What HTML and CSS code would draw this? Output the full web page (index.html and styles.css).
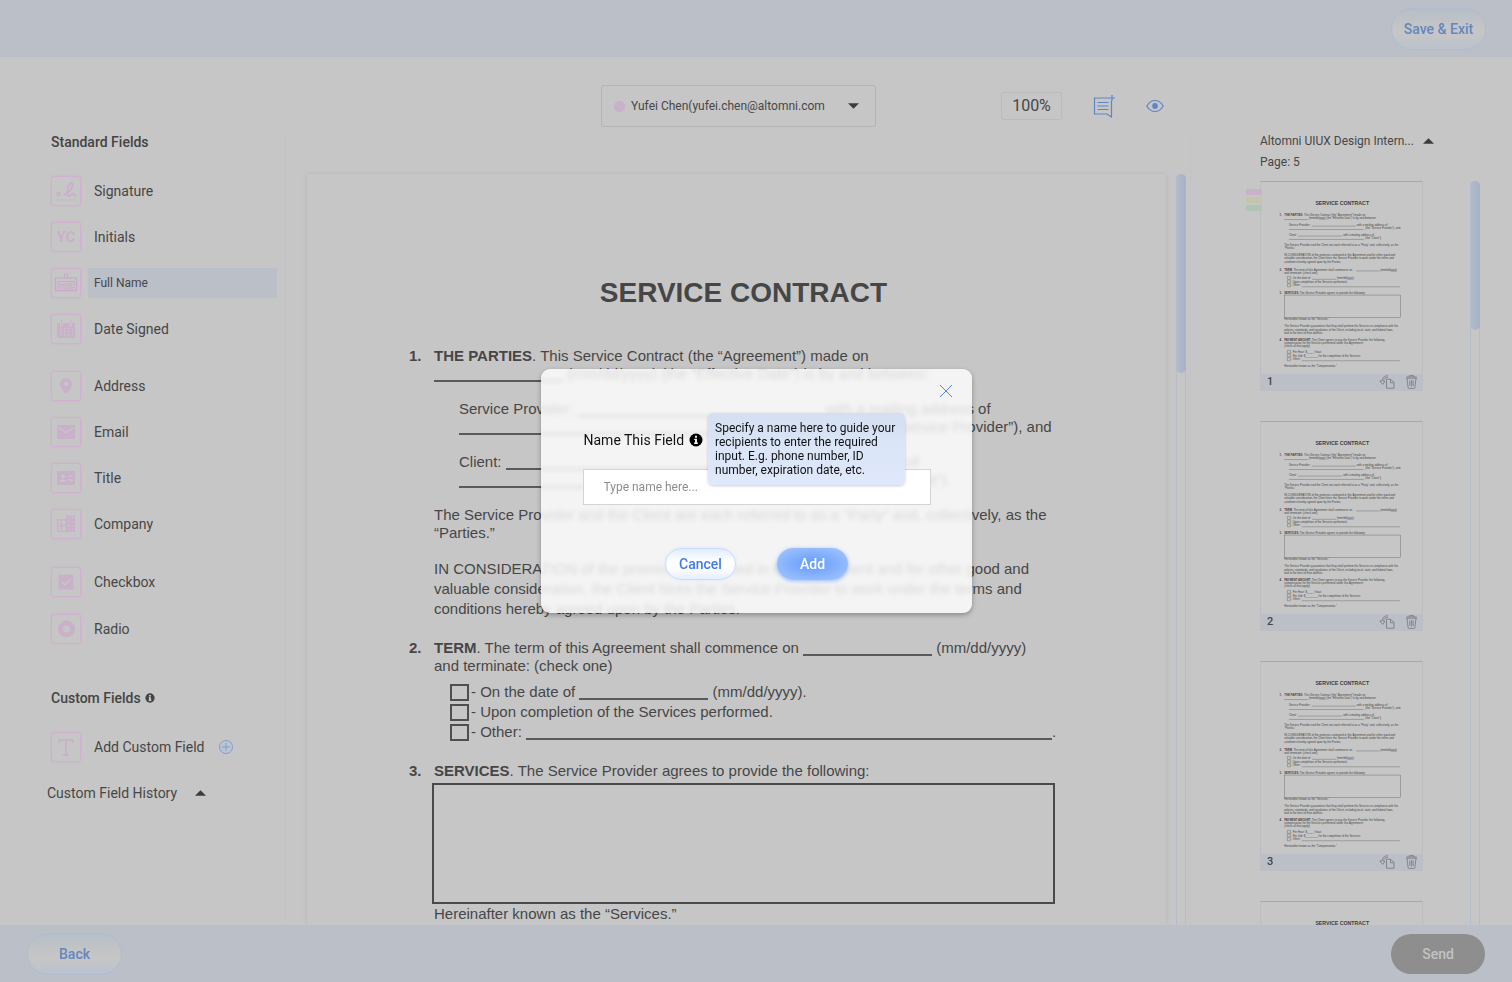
FILE: index.html
```html
<!DOCTYPE html>
<html lang="en">
<head>
<meta charset="utf-8">
<meta name="viewport" content="width=device-width, initial-scale=1">
<title>Service Contract</title>
<link rel="stylesheet" href="styles.css">
</head>
<body>
<svg class="defs" aria-hidden="true">
  <symbol id="info" viewBox="0 0 14 14"><circle cx="7" cy="7" r="6.5" fill="currentColor"/><path class="info-mark" d="M6 2.8h2v2H6zM5.2 5.8H8v3.8h.9V11H5.1V9.600h.9V7.100h-.8z"/></symbol>
  <symbol id="up" viewBox="0 0 12 6"><path d="M6 0l6 6H0z" fill="currentColor"/></symbol>
  <symbol id="down" viewBox="0 0 12 6"><path d="M0 0h12L6 6z" fill="currentColor"/></symbol>
  <symbol id="replace" viewBox="0 0 16 14"><g fill="none" stroke="currentColor" stroke-width=".8"><path d="M7.500 4.200h4.200l3.300 3.300v5.700H7.500zM11.500 4.300v3.500h3.400"/><path d="M9 .8C5.500.6 3.300 2.600 3 6H.8l2.900 3.400L6 6.500l-1.500-.3C4.800 3.800 6.200 2.600 9 2.200"/></g></symbol>
  <symbol id="trash" viewBox="0 0 12 14"><g fill="none" stroke="currentColor" stroke-width=".8"><path d="M.5 3.200h11M1 1.900h10M4 1.700V.6h4v1.100M1.500 3.400l1.100 9.100q.1.900 1 .9h4.800q.9 0 1-.9l1.100-9.100"/><path d="M4.300 5.500v5.500M6 5v6.500M7.700 5.500v5.500"/></g></symbol>
  <symbol id="contract" viewBox="4 8 860 1020">
    <text class="mini-title" x="438" y="127" text-anchor="middle">SERVICE CONTRACT</text>
    <g class="mini-text">
      <text x="103" y="186" class="mini-bold">1.</text><text x="128" y="186"><tspan class="mini-bold">THE PARTIES</tspan>. This Service Contract (the “Agreement”) made on</text>
      <text x="260" y="204">(mm/dd/yyyy) (the “Effective Date”) is by and between:</text>
      <text x="153" y="239">Service Provider:</text><text x="515" y="239">with a mailing address of</text><text x="561" y="257">(the “Service Provider”), and</text>
      <text x="153" y="292">Client:</text><text x="443" y="292">with a mailing address of</text><text x="561" y="310">(the “Client”).</text>
      <text x="128" y="346">The Service Provider and the Client are each referred to as a “Party” and, collectively, as the</text><text x="128" y="364">“Parties.”</text>
      <text x="128" y="399">IN CONSIDERATION of the promises contained in this Agreement and for other good and</text><text x="128" y="419">valuable consideration, the Client hires the Service Provider to work under the terms and</text><text x="128" y="439">conditions hereby agreed upon by the Parties.</text>
      <text x="103" y="478" class="mini-bold">2.</text><text x="128" y="478"><tspan class="mini-bold">TERM</tspan>. The term of this Agreement shall commence on</text><text x="641" y="478">(mm/dd/yyyy)</text><text x="128" y="496">and terminate: (check one)</text>
      <text x="164" y="523">- On the date of</text><text x="409" y="523">(mm/dd/yyyy).</text><text x="164" y="543">- Upon completion of the Services performed.</text><text x="164" y="563">- Other:</text>
      <text x="103" y="601" class="mini-bold">3.</text><text x="128" y="601"><tspan class="mini-bold">SERVICES</tspan>. The Service Provider agrees to provide the following:</text>
      <text x="128" y="745">Hereinafter known as the “Services.”</text>
      <text x="128" y="782">The Service Provider guarantees that they shall perform the Services in compliance with the</text><text x="128" y="800">policies, standards, and regulations of the Client, including local, state, and federal laws,</text><text x="128" y="818">and to the best of their abilities.</text>
      <text x="103" y="852" class="mini-bold">4.</text><text x="128" y="852"><tspan class="mini-bold">PAYMENT AMOUNT</tspan>. The Client agrees to pay the Service Provider the following</text><text x="128" y="870">compensation for the Services performed under this Agreement:</text><text x="128" y="888">(check all that apply)</text>
      <text x="164" y="918">- Per Hour: $____ / hour.</text><text x="164" y="938">- Per Job: $________ for the completion of the Services.</text><text x="164" y="958">- Other:</text>
      <text x="128" y="995">Hereinafter known as the “Compensation.”</text>
    </g>
    <g class="mini-rule">
      <path d="M128 206h128M274 241h237M153 259h400M202 294h236M153 312h400M511 480h126M277 525h128M222 565h524M222 960h524"/>
      <rect x="128" y="609" width="620" height="119"/>
      <path d="M145 509h16v16h-16zM145 529h16v16h-16zM145 549h16v16h-16zM145 904h16v16h-16zM145 924h16v16h-16zM145 944h16v16h-16z"/>
    </g>
  </symbol>
</svg>

<div class="app">
  <header class="bar"><button class="pill outline push" type="button">Save &amp; Exit</button></header>

  <main class="workspace">
    <aside class="fields">
      <h2 class="heading">Standard Fields</h2>
      <div class="field-groups">
        <div class="field-group">
          <button class="field" type="button"><span class="tile"><svg viewBox="0 0 30 30"><g fill="none" stroke="currentColor" stroke-width="2"><path d="M5.500 16l4 4M9.500 16l-4 4"/><path stroke-linecap="round" d="M13.500 18.500C18 17 22.500 11 21.500 7.800 20.500 5.500 17.500 8 16.800 12 16 16 16 20 18.500 20c2 0 2-3 3.500-2.500.7.500 0 3 2.500 2"/></g><path d="M6 23.900h18" stroke="currentColor" stroke-width="1.800" stroke-dasharray="1.800 2.200"/></svg></span><span class="field-name">Signature</span></button>
          <button class="field" type="button"><span class="tile tile-text">YC</span><span class="field-name">Initials</span></button>
          <button class="field selected" type="button"><span class="tile"><svg viewBox="0 0 30 30"><g fill="none" stroke="currentColor"><path stroke-width="1.300" d="M4.500 9.800h21v12.700h-21z"/><path d="M7 13.500h16v6.500H7zM13.500 11V6h3v5"/><path stroke-width=".8" d="M9 18.500v-3l2 3v-3M12 18.500l1-3 1 3M15.200 18.500v-3l1 2 1-2v3M20.700 15.500h-2v3h2M18.700 17h2"/></g></svg></span><span class="field-name">Full Name</span></button>
          <button class="field" type="button"><span class="tile"><svg viewBox="0 0 30 30"><path fill="currentColor" d="M6 9h3v3h3V9h6v3h3V9h3v15H6z"/><path stroke="currentColor" d="M10.500 6v5M19.500 6v5"/><path class="cut-line" stroke-dasharray="1.500 2.500" stroke-width="1.500" d="M9 14.700h13M9 17.700h13M9 20.700h13"/></svg></span><span class="field-name">Date Signed</span></button>
        </div>
        <div class="field-group">
          <button class="field" type="button"><span class="tile"><svg viewBox="0 0 30 30"><path fill="currentColor" fill-rule="evenodd" d="M15 7a6 6 0 0 0-6 6c0 4.400 6 10 6 10s6-5.600 6-10a6 6 0 0 0-6-6zm0 3.700a2.200 2.200 0 1 1 0 4.400 2.200 2.200 0 0 1 0-4.400z"/></svg></span><span class="field-name">Address</span></button>
          <button class="field" type="button"><span class="tile"><svg viewBox="0 0 30 30"><rect x="6" y="8" width="18" height="14" rx="1" fill="currentColor"/><path class="cut-line" stroke-width="1.500" d="M7.500 10.500l7.500 5 7.500-5"/></svg></span><span class="field-name">Email</span></button>
          <button class="field" type="button"><span class="tile"><svg viewBox="0 0 30 30"><rect x="6" y="8" width="18" height="14" rx="1" fill="currentColor"/><circle class="cut" cx="12" cy="13.500" r="2"/><path class="cut" d="M8.500 18.800c0-3 7-3 7 0z"/><path class="cut-line" stroke-width="1.300" d="M17 13.200h5M17 17h5"/></svg></span><span class="field-name">Title</span></button>
          <button class="field" type="button"><span class="tile"><svg viewBox="0 0 30 30"><path fill="currentColor" d="M15 6.500h9V23H15z"/><path fill="none" stroke="currentColor" stroke-width="1.500" d="M6.700 11H15v11.300H6.700zM10.500 13v8M8 16.700h7"/><path class="cut-line" stroke-width="1.500" stroke-dasharray="1.500 2.500" d="M17.500 8v13M21.500 8v13"/></svg></span><span class="field-name">Company</span></button>
        </div>
        <div class="field-group controls">
          <button class="field" type="button"><span class="tile"><svg viewBox="0 0 30 30"><rect x="7.500" y="7.500" width="15" height="15" rx="1.500" fill="currentColor"/><path class="cut-line" stroke-width="1.500" d="M11 15l3 3 5.500-6"/></svg></span><span class="field-name">Checkbox</span></button>
          <button class="field" type="button"><span class="tile"><svg viewBox="0 0 30 30"><circle cx="15.500" cy="15" r="6" fill="none" stroke="currentColor" stroke-width="5"/></svg></span><span class="field-name">Radio</span></button>
        </div>
      </div>
      <h2 class="heading custom-heading">Custom Fields <svg class="info-small"><use href="#info"/></svg></h2>
      <button class="field" type="button"><span class="tile"><svg viewBox="0 0 30 30"><path fill="none" stroke="currentColor" stroke-width="1.800" d="M8.500 11V8h13v3M15 8v15M12 23h6"/></svg></span><span class="field-name with-icon">Add Custom Field <svg class="plus" viewBox="0 0 14 14"><circle cx="7" cy="7" r="6.500"/><path d="M7 3v8M3 7h8"/></svg></span></button>
      <button class="history" type="button">Custom Field History <svg class="caret"><use href="#up"/></svg></button>
    </aside>

    <section class="editor">
      <div class="toolbar">
        <label class="recipient"><span class="dot"></span><select aria-label="Recipient"><option>Yufei Chen(yufei.chen@altomni.com</option></select><svg class="caret"><use href="#down"/></svg></label>
        <div class="tools">
          <button class="zoom" type="button">100%</button>
          <button class="tool" type="button" aria-label="Add comment"><svg class="note" viewBox="0 0 24 24"><g fill="none" stroke="currentColor" stroke-width="1.200"><path d="M17 4H2.500v16H15l4.500 3V6.500"/><path d="M5.500 8.500h11M5.500 12h11M5.500 15.500h11"/><path d="M20 1v6M17 4h6"/></g></svg></button>
          <button class="tool" type="button" aria-label="Preview"><svg class="eye" viewBox="0 0 18 14"><path fill="none" stroke="currentColor" stroke-width="1.200" d="M.8 7Q4 1.500 9 1.500T17.200 7Q14 12.500 9 12.500T.8 7z"/><ellipse cx="9" cy="7" rx="2.800" ry="3" fill="currentColor"/></svg></button>
        </div>
      </div>
      <div class="canvas">
        <article class="paper">
          <h1>SERVICE CONTRACT</h1>
          <section class="clause">
            <b>1.</b>
            <div>
              <p><b>THE PARTIES</b>. This Service Contract (the “Agreement”) made on<br><span class="blank w128"></span> (mm/dd/yyyy) (the “Effective Date”) is by and between:</p>
              <p class="inset">Service Provider: <span class="blank w238"></span> with a mailing address of<br><span class="blank w400"></span> (the “Service Provider”), and</p>
              <p class="inset">Client: <span class="blank w238"></span> with a mailing address of<br><span class="blank w400"></span> (the “Client”).</p>
              <p>The Service Provider and the Client are each referred to as a “Party” and, collectively, as the<br>“Parties.”</p>
              <p class="loose">IN CONSIDERATION of the promises contained in this Agreement and for other good and<br>valuable consideration, the Client hires the Service Provider to work under the terms and<br>conditions hereby agreed upon by the Parties.</p>
            </div>
          </section>
          <section class="clause">
            <b>2.</b>
            <div>
              <p><b>TERM</b>. The term of this Agreement shall commence on <span class="blank w128"></span> (mm/dd/yyyy)<br>and terminate: (check one)</p>
              <ul class="checks">
                <li><label><input type="checkbox">- On the date of <span class="blank w128"></span> (mm/dd/yyyy).</label></li>
                <li><label><input type="checkbox">- Upon completion of the Services performed.</label></li>
                <li><label><input type="checkbox">- Other: <span class="blank w525"></span>.</label></li>
              </ul>
            </div>
          </section>
          <section class="clause">
            <b>3.</b>
            <div>
              <p><b>SERVICES</b>. The Service Provider agrees to provide the following:</p>
              <div class="answer"></div>
              <p>Hereinafter known as the “Services.”</p>
            </div>
          </section>
        </article>
        <div class="scrollbar"><div class="scroll-thumb long"></div></div>
      </div>
    </section>

    <aside class="pages">
      <div class="pages-inner">
        <button class="doc-title" type="button">Altomni UIUX Design Intern... <svg class="caret"><use href="#up"/></svg></button>
        <p class="page-count">Page: 5</p>
        <div class="thumbs">
          <figure class="thumb"><div class="tags"><i class="tag"></i><i class="tag yellow"></i><i class="tag green"></i></div><svg class="mini"><use href="#contract"/></svg><figcaption>1<span class="thumb-tools"><button type="button" aria-label="Replace page 1"><svg class="replace"><use href="#replace"/></svg></button><button type="button" aria-label="Delete page 1"><svg class="trash"><use href="#trash"/></svg></button></span></figcaption></figure>
          <figure class="thumb"><svg class="mini"><use href="#contract"/></svg><figcaption>2<span class="thumb-tools"><button type="button" aria-label="Replace page 2"><svg class="replace"><use href="#replace"/></svg></button><button type="button" aria-label="Delete page 2"><svg class="trash"><use href="#trash"/></svg></button></span></figcaption></figure>
          <figure class="thumb"><svg class="mini"><use href="#contract"/></svg><figcaption>3<span class="thumb-tools"><button type="button" aria-label="Replace page 3"><svg class="replace"><use href="#replace"/></svg></button><button type="button" aria-label="Delete page 3"><svg class="trash"><use href="#trash"/></svg></button></span></figcaption></figure>
          <figure class="thumb"><svg class="mini"><use href="#contract"/></svg></figure>
        </div>
      </div>
      <div class="scrollbar"><div class="scroll-thumb"></div></div>
    </aside>
  </main>

  <footer class="bar"><button class="pill outline" type="button">Back</button><button class="pill send push" type="button">Send</button></footer>
</div>

<div class="overlay">
  <form class="dialog" role="dialog" aria-label="Name This Field">
    <button class="close" type="button" aria-label="Close"><svg viewBox="0 0 14 14"><path d="M1 1l12 12M13 1L1 13"/></svg></button>
    <div class="label-row"><label for="field-name">Name This Field</label><span class="hint"><svg class="info-icon"><use href="#info"/></svg><span class="tooltip" role="tooltip">Specify a name here to guide your recipients to enter the required input. E.g. phone number, ID number, expiration date, etc.</span></span></div>
    <input class="name-input" id="field-name" type="text" placeholder="Type name here...">
    <div class="actions"><button class="small cancel" type="button">Cancel</button><button class="small add" type="button">Add</button></div>
  </form>
</div>
</body>
</html>
```

FILE: styles.css
```css
* { box-sizing: border-box; }
body { margin: 0; font-family: Roboto, "Liberation Sans", sans-serif; font-size: 14px; line-height: 18px; color: #464646; background: #c6c6c6; }
h1, h2, p, ul, figure { margin: 0; padding: 0; }
button { border: 0; padding: 0; background: none; font: inherit; color: inherit; cursor: pointer; }
svg { display: block; }
.defs { position: absolute; width: 0; height: 0; }
.info-mark { fill: #f0f0f0; }

.app { height: 100vh; display: flex; flex-direction: column; overflow: hidden; }
.bar { flex: none; height: 57px; padding: 0 26px 0 27px; display: flex; align-items: center; background: #bbbfc8; }
.push { margin-left: auto; }
.pill { width: 95px; height: 42px; border-radius: 21px; font-size: 14px; font-weight: 500; }
.outline { color: #6487c2; border: 1px solid #b0bccf; background: linear-gradient(#b5bfca, #c1c3c5 35%, #c6c6c6 60%, #bac2ce); box-shadow: 0 0 4px rgba(198, 198, 198, .4); }
.send { width: 94px; height: 40px; margin-right: 1px; background: #8e8e8e; color: #c2c2c2; }

.workspace { flex: 1; min-height: 0; display: flex; }
.fields { width: 286px; flex: none; margin-top: 76px; padding: 0 7px 0 51px; border-right: 2px solid #c3c4c7; }
.heading { font-size: 14px; font-weight: 500; line-height: 18px; color: #444; display: flex; align-items: center; gap: 4px; }
.field-groups { display: grid; gap: 27px; margin-top: 25px; }
.field-group { display: grid; gap: 16px; }
.controls { gap: 17px; margin-top: 1px; }
.field { width: 100%; height: 30px; display: flex; gap: 7px; text-align: left; }
.tile { width: 30px; height: 30px; flex: none; border-radius: 3px; color: #c9b1c9; box-shadow: inset 0 0 0 1px #cfb0ce, 0 0 3px #cfb4ce; display: grid; place-items: center; }
.tile svg { width: 30px; height: 30px; }
.tile-text { font-size: 15px; font-weight: 700; }
.cut { fill: #c6c6c6; }
.cut-line { fill: none; stroke: #c6c6c6; }
.field-name { flex: 1; padding-left: 6px; display: flex; align-items: center; }
.selected .field-name { background: #bbbfc8; font-size: 12px; }
.selected .tile { color: #cda6cb; }
.with-icon { gap: 14px; }
.custom-heading { margin: 45px 0 25px; }
.info-small { width: 10px; height: 10px; }
.plus { width: 14px; height: 14px; fill: #bec5d2; stroke: #7f9dce; stroke-width: 1; }
.history { margin: 22px 0 0 -4px; display: flex; align-items: center; gap: 18px; }
.caret { width: 11px; height: 6px; color: #3c3c3c; }

.editor { flex: 1; min-width: 0; display: flex; flex-direction: column; padding: 28px 4px 0 21px; }
.toolbar { height: 42px; flex: none; display: grid; grid-template-columns: 1fr 275px 1fr; align-items: center; padding-right: 16px; }
.recipient { grid-column: 2; height: 42px; display: flex; align-items: center; gap: 6px; padding: 0 16px 0 12px; border: 1px solid #b4b4b4; border-radius: 3px; }
.recipient .dot { width: 11px; height: 11px; border-radius: 50%; background: #c9b1c9; }
.recipient select { flex: 1; min-width: 0; border: 0; padding: 0; appearance: none; background: none; color: inherit; font: inherit; font-size: 12px; }
.tools { display: flex; align-items: center; justify-content: flex-end; gap: 30px; padding-right: 6px; }
.zoom { width: 61px; height: 28px; border: 1px solid #bbb; border-radius: 3px; font-size: 16px; }
.tool { color: #5f85c7; }
.note { width: 24px; height: 24px; }
.eye { width: 18px; height: 14px; }
.canvas { flex: 1; min-height: 0; margin-top: 47px; display: flex; gap: 10px; }
.paper { flex: 1; min-width: 0; overflow: hidden; white-space: nowrap; padding: 103px 112px 0 102px; box-shadow: 0 0 4px #b6b6b6; font-family: "Liberation Sans", Arial, sans-serif; font-size: 15px; }
.paper h1 { margin: 0 0 38px 24px; font-size: 28px; line-height: 32px; text-align: center; }
.clause { display: grid; grid-template-columns: 25px 1fr; margin-bottom: 20px; }
.clause p + p { margin-top: 17px; }
.clause .inset { padding-left: 25px; }
.clause .loose { line-height: 20px; }
.blank { display: inline-block; height: 2px; background: #5a5a5a; vertical-align: -3px; }
.w128 { width: 129px; }
.w238 { width: 244px; }
.w400 { width: 400px; }
.w525 { width: 526px; }
.checks { list-style: none; padding: 7px 0 0 16px; line-height: 20px; }
.checks label { display: flex; align-items: center; height: 20px; white-space: pre; }
.checks .blank { align-self: flex-end; margin-bottom: 2px; }
.checks input { appearance: none; width: 19px; height: 17px; margin: 0 2px 0 0; border: 2px solid #4f4f4f; flex: none; }
.answer { height: 121px; margin: 3px -1px 1px -2px; border: 2px solid #4a4a4a; }
.scrollbar { width: 10px; flex: none; border: solid #b6bcc9; border-width: 0 1px; border-radius: 5px 5px 0 0; }
.scroll-thumb { height: 149px; margin: 0 -1px; border-radius: 5px; background: linear-gradient(90deg, #b3bcca, #a4b2c7); }
.scroll-thumb.long { height: 199px; }

.pages { width: 322px; flex: none; margin-top: 75px; display: flex; padding: 0 32px 0 69px; border-left: 1px solid #c2c3c5; overflow: hidden; }
.pages-inner { flex: 1; min-width: 0; font-size: 12px; }
.doc-title { display: flex; align-items: center; gap: 9px; white-space: nowrap; }
.page-count { margin: 3px 0 10px; }
.pages .scrollbar { margin-top: 49px; }
.thumbs { display: grid; gap: 30px; width: 163px; }
.thumb { position: relative; border: 1px solid #bdbec1; border-top-color: #a9a9a9; }
.mini { width: 100%; height: 192px; }
.mini-title { font: 700 28px "Liberation Sans", sans-serif; fill: #3d3d3d; }
.mini-text { font: 15px "Liberation Sans", sans-serif; fill: #444; }
.mini-bold { font-weight: 700; }
.mini-rule { fill: none; stroke: #555; stroke-width: 2; }
.thumb figcaption { height: 16px; padding: 0 4px 0 6px; display: flex; align-items: center; justify-content: space-between; background: #bbbfc8; font-size: 11px; font-weight: 500; line-height: 16px; }
.thumb-tools { display: flex; gap: 10px; color: #777; }
.replace { width: 16px; height: 14px; }
.trash { width: 13px; height: 14px; }
.tags { position: absolute; left: -15px; top: 7px; display: grid; gap: 2px; }
.tag { display: block; width: 16px; height: 6px; border-radius: 1px 4px 4px 1px; background: #c9b1c9; }
.tag.yellow { background: #c5c5ae; }
.tag.green { background: #adc5b2; }

.overlay { position: fixed; inset: 0; display: grid; place-items: center; }
.dialog { position: relative; width: 431px; padding: 62px 41px 33px 42px; border-radius: 9px; background: rgba(255, 255, 255, .8); backdrop-filter: blur(2px); box-shadow: 0 2px 5px rgba(0, 0, 0, .3); color: #111; }
.close { position: absolute; top: 15px; right: 19px; }
.close svg { width: 14px; height: 14px; stroke: #4d86ec; stroke-width: 1; }
.label-row { display: flex; align-items: center; gap: 5px; padding-left: 1px; font-size: 14px; }
.hint { position: relative; }
.info-icon { width: 14px; height: 14px; color: #000; }
.tooltip { position: absolute; z-index: 1; left: 19px; top: -20px; width: 197px; padding: 8px 7px; border-radius: 5px; background: linear-gradient(rgba(210, 223, 242, .95), rgba(222, 232, 251, .95)); box-shadow: 0 1px 3px rgba(0, 0, 0, .2); font-size: 12px; line-height: 14px; }
.name-input { display: block; width: 100%; height: 36px; margin-top: 20px; padding: 0 20px; border: 1px solid #d4d4d4; background: #fff; font: 12px Roboto, sans-serif; }
.name-input::placeholder { color: #8d8d8d; }
.actions { margin-top: 43px; display: flex; justify-content: center; gap: 41px; }
.small { width: 71px; height: 32px; border-radius: 16px; font-size: 14px; font-weight: 500; }
.cancel { color: #3f7ce6; border: 1px solid #cbdcf8; background: linear-gradient(#dfebfd, #fff 40%, #fff 65%, #e4eefe); box-shadow: 0 0 4px #dbe7fb; }
.add { color: #fff; background: radial-gradient(ellipse at center, #629bfb, #a9c8fd); box-shadow: 0 1px 4px #93b9f8; }
```
